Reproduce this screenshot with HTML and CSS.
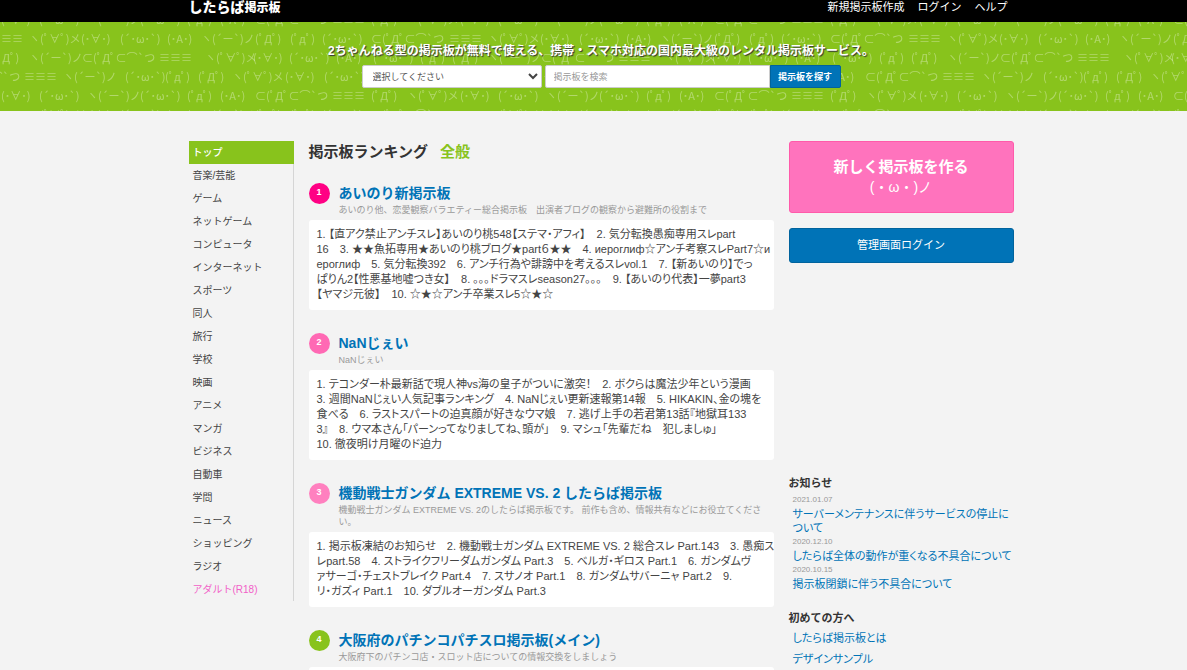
FILE: index.html
```html
<!DOCTYPE html>
<html lang="ja">
<head>
<meta charset="utf-8">
<title>したらば掲示板</title>
<link rel="stylesheet" href="styles.css">
</head>
<body>
<header class="topbar">
  <div class="container topbar-inner">
    <a class="logo" href="#"><span class="logo-main">したらば</span><span class="logo-sub">掲示板</span></a>
    <nav class="topnav"><a href="#">新規掲示板作成</a><a href="#">ログイン</a><a href="#">ヘルプ</a></nav>
  </div>
</header>
<section class="hero">
  <svg class="hero-pattern" aria-hidden="true" width="100%" height="100%">
    <defs>
      <pattern id="kao" width="459" height="76" patternUnits="userSpaceOnUse">
        <g class="kao">
          <text x="-10" y="21">≡≡≡</text><text x="29" y="21">ヽ(ﾟ∀ﾟ)メ</text><text x="81" y="21">(･∀･)</text><text x="120" y="21">(´･ω･`)</text><text x="167" y="21">(･A･)</text><text x="201" y="21">ヽ(´ー`)ノ</text><text x="255" y="21">(ﾟДﾟ)</text><text x="290" y="21">(ﾟдﾟ)</text><text x="322" y="21">(´･ω･`)</text><text x="371" y="21">⊂(ﾟДﾟ⊂⌒`つ</text><text x="449" y="21">≡</text>
          <text x="-7" y="40">(ﾟДﾟ)</text><text x="29" y="40">ヽ(´ー`)ノ</text><text x="82" y="40">⊂(ﾟДﾟ⊂⌒`つ</text><text x="159" y="40">≡≡≡</text><text x="205" y="40">ヽ(ﾟ∀ﾟ)メ</text><text x="253" y="40">(･∀･)</text><text x="289" y="40">(´･ω･`)</text><text x="336" y="40">(･A･)</text><text x="373" y="40">(´･ω･`)</text><text x="420" y="40">(ﾟдﾟ)</text><text x="452" y="40">(ﾟДﾟ)</text>
          <text x="-53" y="59">⊂(ﾟДﾟ⊂⌒`つ</text><text x="24" y="59">≡≡≡</text><text x="63" y="59">ヽ(´ー`)ノ</text><text x="125" y="59">(´･ω･`)</text><text x="165" y="59">(ﾟдﾟ)</text><text x="198" y="59">(ﾟДﾟ)</text><text x="232" y="59">ヽ(ﾟ∀ﾟ)メ</text><text x="285" y="59">(･∀･)</text><text x="324" y="59">(´･ω･`)</text><text x="370" y="59">(･A･)</text><text x="406" y="59">⊂(ﾟДﾟ⊂⌒`つ</text>
          <text x="1" y="2">(･∀･)</text><text x="39" y="2">(´･ω･`)</text><text x="87" y="2">ヽ(´ー`)ノ</text><text x="140" y="2">(´･ω･`)</text><text x="187" y="2">(ﾟдﾟ)</text><text x="220" y="2">(･A･)</text><text x="255" y="2">⊂(ﾟДﾟ⊂⌒`つ</text><text x="332" y="2">≡≡≡</text><text x="371" y="2">(ﾟДﾟ)</text><text x="407" y="2">ヽ(ﾟ∀ﾟ)メ</text>
          <text x="1" y="78">(･∀･)</text><text x="39" y="78">(´･ω･`)</text><text x="87" y="78">ヽ(´ー`)ノ</text><text x="140" y="78">(´･ω･`)</text><text x="187" y="78">(ﾟдﾟ)</text><text x="220" y="78">(･A･)</text><text x="255" y="78">⊂(ﾟДﾟ⊂⌒`つ</text><text x="332" y="78">≡≡≡</text><text x="371" y="78">(ﾟДﾟ)</text><text x="407" y="78">ヽ(ﾟ∀ﾟ)メ</text>
        </g>
      </pattern>
    </defs>
    <rect width="100%" height="100%" fill="url(#kao)"/>
  </svg>
  <div class="hero-inner">
    <p class="hero-title">2ちゃんねる型の掲示板が無料で使える、携帯・スマホ対応の国内最大級のレンタル掲示板サービス。</p>
    <form class="search">
      <div class="select-wrap">
        <select class="field select" aria-label="カテゴリ"><option>選択してください</option></select>
        <svg class="chevron" width="10" height="7" viewBox="0 0 10 7" aria-hidden="true"><path d="M1 1l4 4 4-4" fill="none" stroke="#444" stroke-width="2"/></svg>
      </div>
      <input class="field keyword" type="text" placeholder="掲示板を検索" aria-label="掲示板を検索">
      <button class="search-btn" type="button">掲示板を探す</button>
    </form>
  </div>
</section>
<div class="container columns">
  <nav class="side">
    <a class="current" href="#">トップ</a><a href="#">音楽/芸能</a><a href="#">ゲーム</a><a href="#">ネットゲーム</a><a href="#">コンピュータ</a><a href="#">インターネット</a><a href="#">スポーツ</a><a href="#">同人</a><a href="#">旅行</a><a href="#">学校</a><a href="#">映画</a><a href="#">アニメ</a><a href="#">マンガ</a><a href="#">ビジネス</a><a href="#">自動車</a><a href="#">学問</a><a href="#">ニュース</a><a href="#">ショッピング</a><a href="#">ラジオ</a><a class="adult" href="#">アダルト(R18)</a>
  </nav>
  <main>
    <h1 class="page-title">掲示板ランキング<span>全般</span></h1>
    <article class="board">
      <span class="rank rank-1">1</span>
      <div class="board-head">
        <h2><a href="#">あいのり新掲示板</a></h2>
        <p>あいのり他、恋愛観察バラエティー総合掲示板　出演者ブログの観察から避難所の役割まで</p>
      </div>
      <div class="threads">1. 【直アク禁止アンチスレ】あいのり桃548【ステマ・アフィ】　2. 気分転換愚痴専用スレpart<br>16　3. ★★魚拓専用★あいのり桃ブログ★part６★★　4. иероглиф☆アンチ考察スレPart7☆и<br>ероглиф　5. 気分転換392　6. アンチ行為や誹謗中を考えるスレvol.1　7. 【新あいのり】でっ<br>ぱりん2【性悪基地嘘つき女】　8. ｡｡｡ドラマスレseason27｡｡｡　9. 【あいのり代表】一夢part3<br>【ヤマジ元彼】　10. ☆★☆アンチ卒業スレ5☆★☆</div>
    </article>
    <article class="board">
      <span class="rank rank-2">2</span>
      <div class="board-head">
        <h2><a href="#">NaNじぇい</a></h2>
        <p>NaNじぇい</p>
      </div>
      <div class="threads">1. テコンダー朴最新話で現人神vs海の皇子がついに激突！　2. ボクらは魔法少年という漫画<br>3. 週間NaNじぇい人気記事ランキング　4. NaNじぇい更新速報第14報　5. HIKAKIN、金の塊を<br>食べる　6. ラストスパートの迫真顔が好きなウマ娘　7. 逃げ上手の若君第13話『地獄耳133<br>3』　8. ウマ本さん「パーンってなりましてね、頭が」　9. マシュ「先輩だね　犯しましゅ」<br>10. 徹夜明け月曜のド迫力</div>
    </article>
    <article class="board">
      <span class="rank rank-3">3</span>
      <div class="board-head">
        <h2><a href="#">機動戦士ガンダム EXTREME VS. 2 したらば掲示板</a></h2>
        <p>機動戦士ガンダム EXTREME VS. 2のしたらば掲示板です。 前作も含め、情報共有などにお役立てくださ<br>い。</p>
      </div>
      <div class="threads">1. 掲示板凍結のお知らせ　2. 機動戦士ガンダム EXTREME VS. 2 総合スレ Part.143　3. 愚痴ス<br>レpart.58　4. ストライクフリーダムガンダム Part.3　5. ベルガ・ギロス Part.1　6. ガンダムヴ<br>ァサーゴ・チェストブレイク Part.4　7. スサノオ Part.1　8. ガンダムサバーニャ Part.2　9.<br>リ・ガズィ Part.1　10. ダブルオーガンダム Part.3</div>
    </article>
    <article class="board">
      <span class="rank rank-4">4</span>
      <div class="board-head">
        <h2><a href="#">大阪府のパチンコパチスロ掲示板(メイン)</a></h2>
        <p>大阪府下のパチンコ店・スロット店についての情報交換をしましょう</p>
      </div>
      <div class="threads"></div>
    </article>
  </main>
  <aside class="aside">
    <a class="create" href="#"><strong>新しく掲示板を作る</strong><span>(・ω・)ノ</span></a>
    <a class="admin" href="#">管理画面ログイン</a>
    <div class="ad-slot"></div>
    <h3>お知らせ</h3>
    <dl class="news">
      <dt>2021.01.07</dt><dd><a href="#">サーバーメンテナンスに伴うサービスの停止に<br>ついて</a></dd>
      <dt>2020.12.10</dt><dd><a href="#">したらば全体の動作が重くなる不具合について</a></dd>
      <dt>2020.10.15</dt><dd><a href="#">掲示板閉鎖に伴う不具合について</a></dd>
    </dl>
    <h3>初めての方へ</h3>
    <ul class="guide">
      <li><a href="#">したらば掲示板とは</a></li>
      <li><a href="#">デザインサンプル</a></li>
    </ul>
  </aside>
</div>
</body>
</html>
```
FILE: styles.css
```css
* { box-sizing: border-box; }
body {
  margin: 0;
  height: 100vh;
  overflow: hidden;
  background: #f3f3f3;
  color: #444;
  font-family: "Liberation Sans", "Noto Sans CJK JP", sans-serif;
  font-size: 11px;
  line-height: 15px;
}
a { color: #0073b7; text-decoration: none; }
h1, h2, h3, p, dl, dd, ul { margin: 0; padding: 0; }
.container { max-width: 840px; margin: 0 auto; padding-left: 15px; }

.topbar { background: #000; height: 22px; }
.topbar-inner { display: flex; justify-content: space-between; }
.logo { display: flex; align-items: baseline; color: #fff; font-weight: 900; line-height: 15px; }
.logo-main { font-size: 14px; }
.logo-sub { font-size: 12px; }
.topnav { display: flex; gap: 13px; padding-right: 6px; }
.topnav a { color: #fff; }

.hero { position: relative; height: 89px; background: #88c31c; overflow: hidden; }
.hero-pattern { position: absolute; inset: 0; }
.kao { font-family: "Noto Sans CJK JP", sans-serif; font-size: 11px; font-weight: 400; fill: #fff; fill-opacity: 0.35; }
.hero-inner { position: relative; display: flex; flex-direction: column; align-items: center; gap: 5px; padding: 21px 0 0 15px; }
.hero-title { color: #fff; font-size: 12px; line-height: 17px; font-weight: bold; text-shadow: 1px 1px 1px #333; white-space: nowrap; }
.search { display: flex; }
.select-wrap { position: relative; margin-right: 3px; }
.field {
  height: 23px; border: 1px solid #ccc; background: #fff; color: #555;
  font-family: inherit; font-size: 9px; border-radius: 2px; padding: 0 8px; outline: none;
}
.select { width: 180px; appearance: none; padding-left: 10px; display: block; }
.chevron { position: absolute; right: 4px; top: 8px; }
.keyword { width: 225px; border-radius: 2px 0 0 2px; }
.keyword::placeholder { color: #999; }
.search-btn {
  width: 71px; height: 23px; padding: 0; border: 1px solid #00639d; border-radius: 0 2px 2px 0;
  background: #0073b7; color: #fff; font-family: inherit; font-size: 9px; font-weight: bold;
}

.columns { display: grid; grid-template-columns: 105px minmax(0, 1fr) 225px; gap: 15px; padding-top: 30px; align-items: start; }
.side { display: flex; flex-direction: column; border-right: 1px solid #d5d5d5; font-size: 10px; line-height: 23px; }
.side a { color: #444; padding-left: 4px; }
.side .current { background: #88c31c; color: #fff; margin-right: -1px; font-weight: 500; }
.side .adult { color: #f25fc8; }

.page-title { color: #333; font-size: 15px; line-height: 22px; margin-bottom: 20px; }
.page-title span { color: #88c31c; margin-left: 12px; }
.board { display: grid; grid-template-columns: 21px minmax(0, 1fr); column-gap: 9px; row-gap: 4px; margin-bottom: 23px; }
.rank { width: 21px; height: 21px; border-radius: 50%; color: #fff; font-size: 9px; font-weight: bold; line-height: 19px; text-align: center; }
.rank-1 { background: #ff0084; }
.rank-2 { background: #ff69b4; }
.rank-3 { background: #ff80bf; }
.rank-4 { background: #88c31c; }
.board-head h2 { font-size: 14px; line-height: 20px; padding-bottom: 1px; }
.board-head p { color: #999; font-size: 9px; line-height: 12px; white-space: nowrap; }
.threads {
  grid-column: 1 / -1; min-height: 15px; padding: 7px 8px 8px; border-radius: 3px; background: #fff;
  font-feature-settings: "palt"; white-space: nowrap;
}

.create, .admin { display: flex; flex-direction: column; align-items: center; justify-content: center; color: #fff; border-radius: 3px; }
.create { height: 72px; background: #ff73bd; border: 1px solid #ff5aaa; font-size: 15px; line-height: 20px; }
.create span { font-size: 14px; }
.admin { height: 35px; margin-top: 15px; background: #0073b7; border: 1px solid #00639d; }
.ad-slot { height: 213px; }
.aside h3 { color: #333; font-size: 11px; line-height: 14px; }
.news { padding: 3px 0 20px 4px; line-height: 14px; font-feature-settings: "palt"; white-space: nowrap; }
.news dt { color: #999; font-size: 8px; }
.guide { list-style: none; padding: 3px 0 0 4px; line-height: 21px; font-feature-settings: "palt"; }
```
